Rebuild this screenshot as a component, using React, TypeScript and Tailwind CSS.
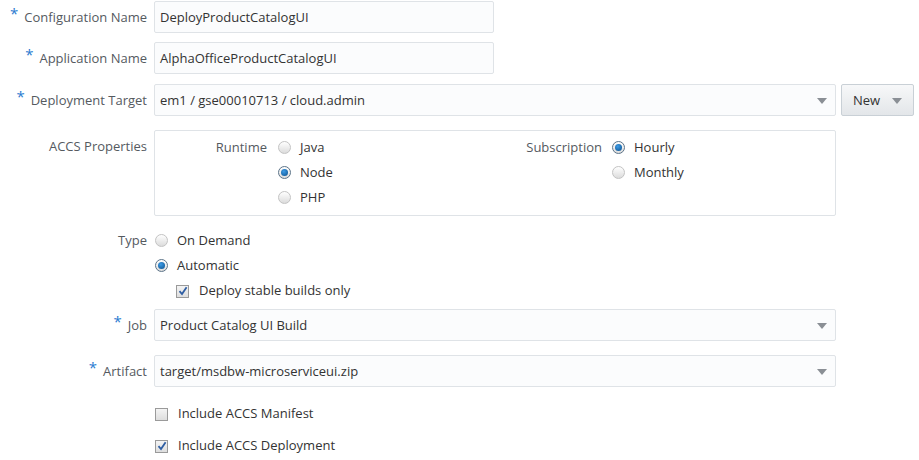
import React from 'react';

const font = { fontFamily: '"Open Sans", "Noto Sans", sans-serif' };

const Caret = ({ className = '' }: { className?: string }) => (
    <svg width="10" height="6" viewBox="0 0 10 6" className={className}>
        <path d="M0 0 L10 0 L5 6 Z" fill="#8a8f95" />
    </svg>
);

const Radio = ({ checked }: { checked?: boolean }) => (
    <span
        className={`relative inline-flex h-[13px] w-[13px] shrink-0 items-center justify-center rounded-full border bg-gradient-to-b from-[#ffffff] to-[#dcdcdc] ${checked ? 'border-[#5d7489]' : 'border-[#c3c3c3]'}`}
    >
        {checked && <span className="h-[7px] w-[7px] rounded-full bg-[radial-gradient(circle_at_40%_35%,#3c9be6,#0b4f8c)]" />}
    </span>
);

const Checkbox = ({ checked }: { checked?: boolean }) => (
    <span className="relative inline-flex h-[13px] w-[13px] shrink-0 items-center justify-center border border-[#9a9a9a] bg-gradient-to-b from-[#f4f4f4] to-[#dedede]">
        {checked && (
            <svg width="10" height="10" viewBox="0 0 10 10">
                <path d="M1.5 5.2 L4 8 L8.6 1.2" fill="none" stroke="#2f5ea3" strokeWidth="1.8" />
            </svg>
        )}
    </span>
);

const Label = ({ text, required }: { text: string; required?: boolean }) => (
    <div className="flex w-[147px] shrink-0 items-center justify-end pt-[1px] text-[13px] text-[#555a5f]">
        {required && <span className="mr-[6px] -mt-[8px] text-[15px] leading-none text-[#2a7bd0]">*</span>}
        <span>{text}</span>
    </div>
);

const TextInput = ({ value }: { value: string }) => (
    <div className="ml-[7px] flex h-[32px] w-[340px] items-center rounded-[2px] border border-[#dfe3e7] bg-[#fbfcfd] px-[5px] pt-[1px] text-[13px] text-[#333333]">
        {value}
    </div>
);

const Select = ({ value }: { value: string }) => (
    <div className="ml-[7px] flex h-[32px] w-[682px] items-center justify-between rounded-[2px] border border-[#dfe3e7] bg-[#fbfcfd] pl-[5px] pr-[8px] pt-[1px] text-[13px] text-[#333333]">
        <span>{value}</span>
        <Caret />
    </div>
);

const Option = ({ text, checked }: { text: string; checked?: boolean }) => (
    <div className="flex h-[25px] items-center">
        <Radio checked={checked} />
        <span className="ml-[9px] text-[13px] text-[#333333]">{text}</span>
    </div>
);

export default function App() {
    return (
        <div className="h-[460px] w-[919px] bg-white pt-[1px]" style={font}>
            <div className="flex items-center">
                <Label text="Configuration Name" required />
                <TextInput value="DeployProductCatalogUI" />
            </div>
            <div className="mt-[9px] flex items-center">
                <Label text="Application Name" required />
                <TextInput value="AlphaOfficeProductCatalogUI" />
            </div>
            <div className="mt-[10px] flex items-center">
                <Label text="Deployment Target" required />
                <Select value="em1 / gse00010713 / cloud.admin" />
                <button className="ml-[5px] flex h-[32px] w-[73px] items-center justify-center gap-[12px] rounded-[2px] border border-[#c9d0d6] bg-gradient-to-b from-[#f7f8f9] to-[#e3e6e9] pt-[1px] text-[13px] text-[#333333]">
                    <span>New</span>
                    <Caret />
                </button>
            </div>

            {/* ACCS Properties */}
            <div className="mt-[14px] flex items-start">
                <div className="flex w-[147px] shrink-0 justify-end pt-[7px] text-[13px] text-[#555a5f]">ACCS Properties</div>
                <div className="ml-[7px] flex h-[86px] w-[682px] rounded-[2px] border border-[#dfe3e7] pt-[4px]">
                    <div className="flex w-[370px] items-start">
                        <div className="flex h-[25px] w-[112px] items-center justify-end text-[13px] text-[#555a5f]">Runtime</div>
                        <div className="ml-[11px] flex flex-col">
                            <Option text="Java" />
                            <Option text="Node" checked />
                            <Option text="PHP" />
                        </div>
                    </div>
                    <div className="flex items-start">
                        <div className="flex h-[25px] w-[77px] items-center justify-end text-[13px] text-[#555a5f]">Subscription</div>
                        <div className="ml-[10px] flex flex-col">
                            <Option text="Hourly" checked />
                            <Option text="Monthly" />
                        </div>
                    </div>
                </div>
            </div>

            {/* Type */}
            <div className="mt-[12px] flex items-start">
                <div className="flex h-[25px] w-[147px] shrink-0 items-center justify-end text-[13px] text-[#555a5f]">Type</div>
                <div className="ml-[8px] flex flex-col">
                    <Option text="On Demand" />
                    <Option text="Automatic" checked />
                    <div className="ml-[21px] flex h-[26px] items-center">
                        <Checkbox checked />
                        <span className="ml-[10px] text-[13px] text-[#333333]">Deploy stable builds only</span>
                    </div>
                </div>
            </div>

            <div className="mt-[5px] flex items-center">
                <Label text="Job" required />
                <Select value="Product Catalog UI Build" />
            </div>
            <div className="mt-[14px] flex items-center">
                <Label text="Artifact" required />
                <Select value="target/msdbw-microserviceui.zip" />
            </div>

            <div className="mt-[14px] ml-[155px] flex h-[26px] items-center">
                <Checkbox />
                <span className="ml-[10px] text-[13px] text-[#333333]">Include ACCS Manifest</span>
            </div>
            <div className="mt-[6px] ml-[155px] flex h-[26px] items-center">
                <Checkbox checked />
                <span className="ml-[10px] text-[13px] text-[#333333]">Include ACCS Deployment</span>
            </div>
        </div>
    );
}
